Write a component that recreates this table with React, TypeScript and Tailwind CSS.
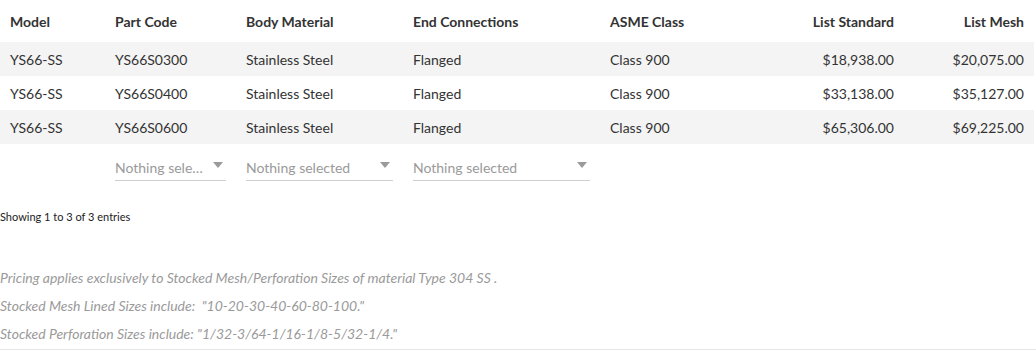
import React from "react";

const rows = [
  ["YS66-SS", "YS66S0300", "Stainless Steel", "Flanged", "Class 900", "$18,938.00", "$20,075.00"],
  ["YS66-SS", "YS66S0400", "Stainless Steel", "Flanged", "Class 900", "$33,138.00", "$35,127.00"],
  ["YS66-SS", "YS66S0600", "Stainless Steel", "Flanged", "Class 900", "$65,306.00", "$69,225.00"],
];

function Dropdown({ label }: { label: string }) {
  return (
    <div className="relative flex h-[26px] items-center border-b border-[#cfcfcf] pr-[17px]">
      <span className="truncate text-[#9a9a9a]">{label}</span>
      <span className="absolute right-[3px] top-[7px] h-0 w-0 border-x-[5px] border-t-[6px] border-x-transparent border-t-[#9a9a9a]" />
    </div>
  );
}

export default function App() {
  return (
    <div className="w-[1036px] bg-white text-[14px] text-[#333]" style={{ fontFamily: "Lato, 'Noto Sans', sans-serif" }}>
      <table className="w-[1034px] table-fixed border-collapse">
        <colgroup>
          <col className="w-[105px]" />
          <col className="w-[131px]" />
          <col className="w-[167px]" />
          <col className="w-[197px]" />
          <col className="w-[150px]" />
          <col className="w-[154px]" />
          <col className="w-[130px]" />
        </colgroup>
        <thead>
          <tr className="h-[42px]">
            <th className="px-[10px] text-left font-bold">Model</th>
            <th className="px-[10px] text-left font-bold">Part Code</th>
            <th className="px-[10px] text-left font-bold">Body Material</th>
            <th className="px-[10px] text-left font-bold">End Connections</th>
            <th className="px-[10px] text-left font-bold">ASME Class</th>
            <th className="px-[10px] text-right font-bold">List Standard</th>
            <th className="px-[10px] text-right font-bold">List Mesh</th>
          </tr>
        </thead>
        <tbody>
          {rows.map((r, i) => (
            <tr key={i} className={i % 2 === 0 ? "h-[34px] bg-[#f4f4f4]" : "h-[34px] bg-white"}>
              {r.map((c, j) => (
                <td key={j} className={j >= 5 ? "px-[10px] text-right" : "px-[10px] text-left"}>
                  {c}
                </td>
              ))}
            </tr>
          ))}
        </tbody>
        <tfoot>
          <tr>
            <td className="px-[10px] pt-[11px] pb-[9px]"></td>
            <td className="px-[10px] pt-[11px] pb-[9px]"><Dropdown label="Nothing selected" /></td>
            <td className="px-[10px] pt-[11px] pb-[9px]"><Dropdown label="Nothing selected" /></td>
            <td className="px-[10px] pt-[11px] pb-[9px]"><Dropdown label="Nothing selected" /></td>
            <td></td>
            <td></td>
            <td></td>
          </tr>
        </tfoot>
      </table>
      <div className="pt-[19px] text-[11px] text-[#222]">Showing 1 to 3 of 3 entries</div>
      <div className="mt-[42px] flex flex-col gap-[8px] border-b border-[#e6e6e6] pb-[5px] italic text-[#9a9a9a]">
        <p className="leading-[20px]">Pricing applies exclusively to Stocked Mesh/Perforation Sizes of material Type 304 SS .</p>
        <p className="leading-[20px]">Stocked Mesh Lined Sizes include:&nbsp; "10-20-30-40-60-80-100."</p>
        <p className="leading-[20px]">Stocked Perforation Sizes include: "1/32-3/64-1/16-1/8-5/32-1/4."</p>
      </div>
    </div>
  );
}
